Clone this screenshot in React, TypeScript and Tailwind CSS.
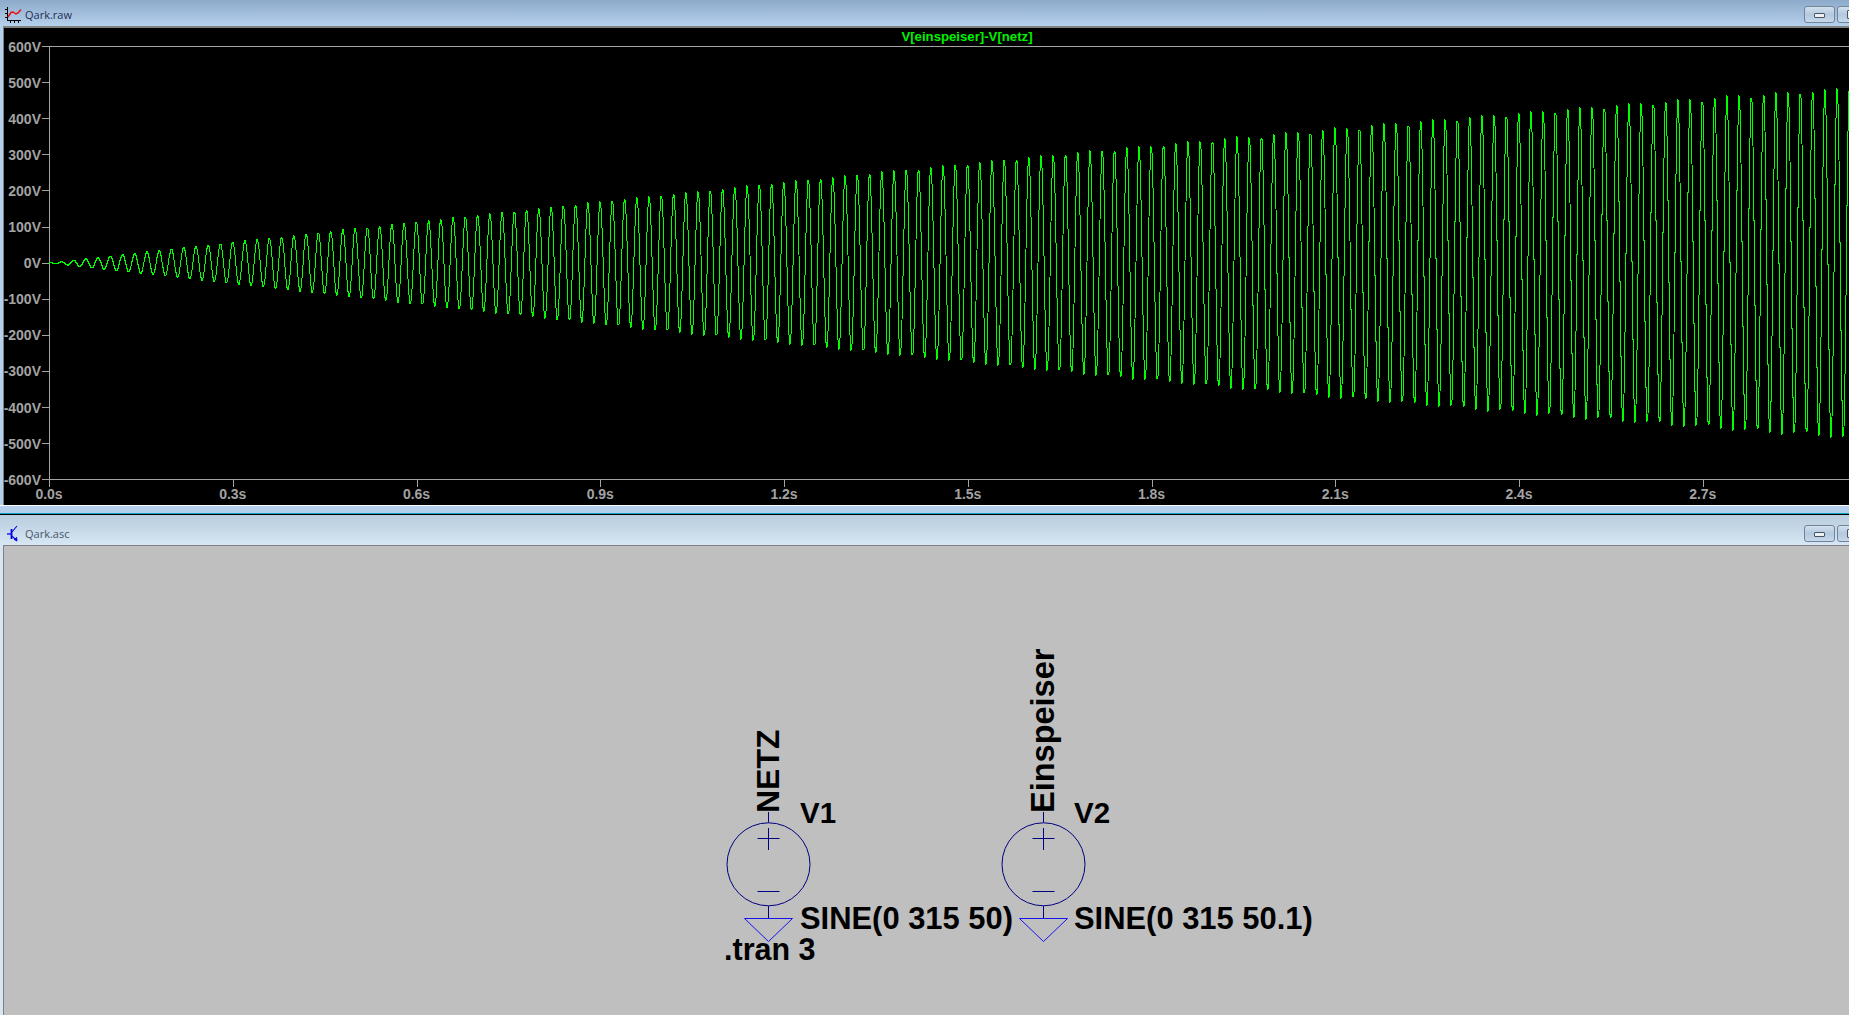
import { ReactNode } from "react"

const AXIS = "#a3a3a3"
const SANS = "[font-family:'Liberation_Sans',Arial,sans-serif]"

const X0 = 49
const Y0 = 262.5
const PX_PER_S = 613
const PX_PER_V = 0.35

// Difference of the two sources: 315*sin(2pi*50.1t) - 315*sin(2pi*50t)
function tracePath() {
  const pts: string[] = []
  for (let x = X0; x <= 1849; x++) {
    const t = (x - X0) / PX_PER_S
    const v = 630 * Math.cos(2 * Math.PI * 50.05 * t) * Math.sin(Math.PI * 0.1 * t)
    pts.push(`${x},${Math.round(Y0 - v * PX_PER_V) + 0.5}`)
  }
  return "M" + pts.join("L")
}

const yTicks = [600, 500, 400, 300, 200, 100, 0, -100, -200, -300, -400, -500, -600]
const xTicks = ["0.0s", "0.3s", "0.6s", "0.9s", "1.2s", "1.5s", "1.8s", "2.1s", "2.4s", "2.7s"]

function WinButton({ tall }: { tall?: boolean }) {
  return (
    <div className="flex h-[17px] w-[31px] shrink-0 items-center justify-center rounded-[3px] border border-[#71849b] bg-gradient-to-b from-[#d3e0ec] via-[#b3c9de] to-[#c6d9ea]">
      <div className={`${tall ? "h-[9px]" : "mt-[3px] h-[5px]"} w-[11px] rounded-[1px] border border-[#4a5361] bg-[#eef1f4]`} />
    </div>
  )
}

function TitleBar({ icon, title, className, textClass }: { icon: ReactNode; title: string; className: string; textClass: string }) {
  return (
    <div className={`flex shrink-0 items-center pl-[5px] ${className}`}>
      {icon}
      <span className={`mt-[2px] ml-[3px] text-[11px] font-['Open_Sans',sans-serif] ${textClass}`}>{title}</span>
      <div className="ml-auto flex w-[45px] shrink-0 gap-[2px]">
        <WinButton />
        <WinButton tall />
      </div>
    </div>
  )
}

function ChartIcon() {
  return (
    <svg width="17" height="17" viewBox="0 0 17 17" shapeRendering="crispEdges">
      <path d="M2.5 1V15M0 3.5H2M0 7.5H2M0 11.5H2M2 14.5H16M5.5 15V17M9.5 15V17M13.5 15V17" stroke="#000" fill="none" />
      <path d="M3 11L6 6.5L8 6L11 8L13 7L16 3.5" stroke="#e81010" strokeWidth="1.5" fill="none" shapeRendering="auto" />
    </svg>
  )
}

function TransistorIcon() {
  return (
    <svg width="17" height="17" viewBox="-2 0 17 17" fill="none" stroke="#0000e6">
      <path d="M0 9H4" strokeWidth="1.3" />
      <path d="M4.5 4V14" strokeWidth="1.8" />
      <path d="M5 7L10 1M5 11L10 16" strokeWidth="1.1" />
      <path d="M7 14.5L10 15.5L9.5 12" fill="#0000e6" strokeWidth="0.8" />
    </svg>
  )
}

function WaveformPlot() {
  return (
    <svg className={`block ${SANS}`} width="1845" height="477" viewBox="4 28 1845 477">
      <g stroke={AXIS} fill="none" shapeRendering="crispEdges">
        <path d={`M${X0}.5 46V479M42 46.5H1849M42 479.5H1849`} />
        {yTicks.map((v, i) => {
          const y = Math.round(46 + i * 36.1) + 0.5
          return <path key={v} d={`M42 ${y}H${X0}`} />
        })}
        {xTicks.map((_, i) => {
          const x = Math.round(X0 + i * 183.75) + 0.5
          return <path key={i} d={`M${x} 479V487`} />
        })}
      </g>
      <g fill={AXIS} fontSize="14" fontWeight="700">
        {yTicks.map((v, i) => (
          <text key={v} x="41" y={51.5 + i * 36.1} textAnchor="end">
            {v}V
          </text>
        ))}
        {xTicks.map((label, i) => (
          <text key={label} x={X0 + i * 183.75} y="499" textAnchor="middle">
            {label}
          </text>
        ))}
      </g>
      <path d={tracePath()} fill="none" stroke="#00ff00" strokeWidth="1" shapeRendering="crispEdges" />
      <text x="967" y="40.5" textAnchor="middle" fill="#00f000" fontSize="13.2" fontWeight="700">
        V[einspeiser]-V[netz]
      </text>
    </svg>
  )
}

function VoltageSource({ cx }: { cx: number }) {
  const cy = 864.3
  return (
    <g fill="none">
      <g stroke="#000080">
        <circle cx={cx} cy={cy} r="41.5" />
        <path d={`M${cx} 812V822.5M${cx - 11} 838.5H${cx + 11}M${cx} 828V850M${cx - 11} 891.5H${cx + 11}M${cx} 906V918`} />
      </g>
      <path d={`M${cx} 941.5L${cx - 24} 918.5H${cx + 24}Z`} stroke="#1414f0" />
    </g>
  )
}

function Schematic() {
  return (
    <svg className={`block ${SANS}`} width="1845" height="469" viewBox="4 546 1845 469">
      <VoltageSource cx={768.5} />
      <VoltageSource cx={1043.5} />
      <g fill="#000" fontWeight="700">
        <text x="779" y="813" fontSize="32" transform="rotate(-90 779 813)">NETZ</text>
        <text x="1053.5" y="813" fontSize="32.5" transform="rotate(-90 1053.5 813)">Einspeiser</text>
        <text x="800" y="823" fontSize="29.5">V1</text>
        <text x="1074" y="823" fontSize="29.5">V2</text>
        <text x="800" y="928.5" fontSize="30.9">SINE(0 315 50)</text>
        <text x="1074" y="928.5" fontSize="30.9">SINE(0 315 50.1)</text>
        <text x="724" y="959.5" fontSize="30.5">.tran 3</text>
      </g>
    </svg>
  )
}

export default function App() {
  return (
    <div className="flex h-[1015px] w-[1849px] flex-col overflow-hidden bg-[#c0c0c0]">
      <div className="flex shrink-0 flex-col bg-[#b5d0ec]">
        <TitleBar
          icon={<ChartIcon />}
          title="Qark.raw"
          className="h-[26px] bg-gradient-to-b from-[#8eaaca] to-[#b5d1ed] pt-[2px]"
          textClass="text-[#1f2f55]"
        />
        <div className="ml-[3px] border-t-2 border-l border-[#808080] border-b-0 bg-black">
          <WaveformPlot />
        </div>
        <div className="h-[8px] border-t border-white bg-[#b5d0ec]" />
      </div>
      <div className="h-px shrink-0 bg-[#12a3c4]" />
      <div className="h-px shrink-0 bg-black" />
      <div className="flex min-h-0 flex-1 flex-col bg-[#d5e5f3]">
        <TitleBar
          icon={<TransistorIcon />}
          title="Qark.asc"
          className="h-[30px] bg-gradient-to-b from-[#b9cddd] to-[#d6e6f4] pt-[6px]"
          textClass="text-[#4a5568]"
        />
        <div className="ml-[3px] min-h-0 flex-1 border-t border-l border-[#808080] bg-[#bfbfbf]">
          <Schematic />
        </div>
      </div>
    </div>
  )
}
